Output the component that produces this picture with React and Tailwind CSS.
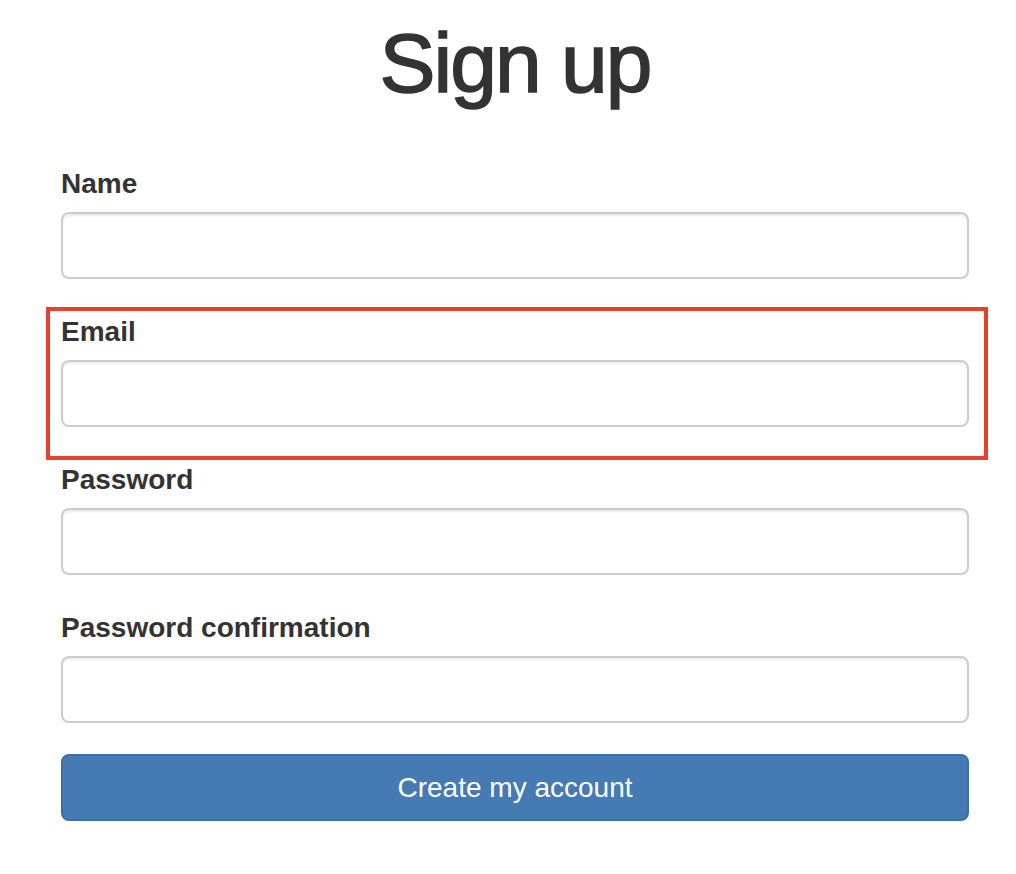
import React from 'react';

const Field = ({ label, type = 'text', highlighted = false }) => (
  <div className="relative">
    <label className="block h-10 leading-10 mb-2 text-[28px] font-bold text-[#333]">
      {label}
    </label>
    <input
      type={type}
      className="block w-full h-[67px] rounded-lg border-2 border-[#cccccc] bg-white px-6 text-[28px] shadow-[inset_0_2px_2px_rgba(0,0,0,0.075)] outline-none"
    />
    {/* Annotation box drawn over the field */}
    {highlighted && (
      <div className="absolute -left-[15px] -right-[19px] -top-[5px] -bottom-[33px] border-4 border-[#e8402a] pointer-events-none" />
    )}
  </div>
);

export default function App() {
  return (
    <div
      className="min-h-[874px] bg-white"
      style={{ fontFamily: '"Liberation Sans", Arial, Helvetica, sans-serif' }}
    >
      <div className="w-[908px] ml-[61px]">
        <h1 className="pt-[17px] h-[113px] leading-[92px] text-center text-[84px] font-normal tracking-[-2px] text-[#333] [-webkit-text-stroke:1.5px_#333]">
          Sign up
        </h1>

        <form className="mt-[51px] flex flex-col gap-[33px]">
          <Field label="Name" />
          <Field label="Email" type="email" highlighted />
          <Field label="Password" type="password" />
          <Field label="Password confirmation" type="password" />
        </form>

        <button
          type="button"
          className="mt-[31px] block w-full h-[67px] rounded-lg border-2 border-[#3d6fa5] bg-[#467ab3] text-[28px] text-white"
        >
          Create my account
        </button>
      </div>
    </div>
  );
}
